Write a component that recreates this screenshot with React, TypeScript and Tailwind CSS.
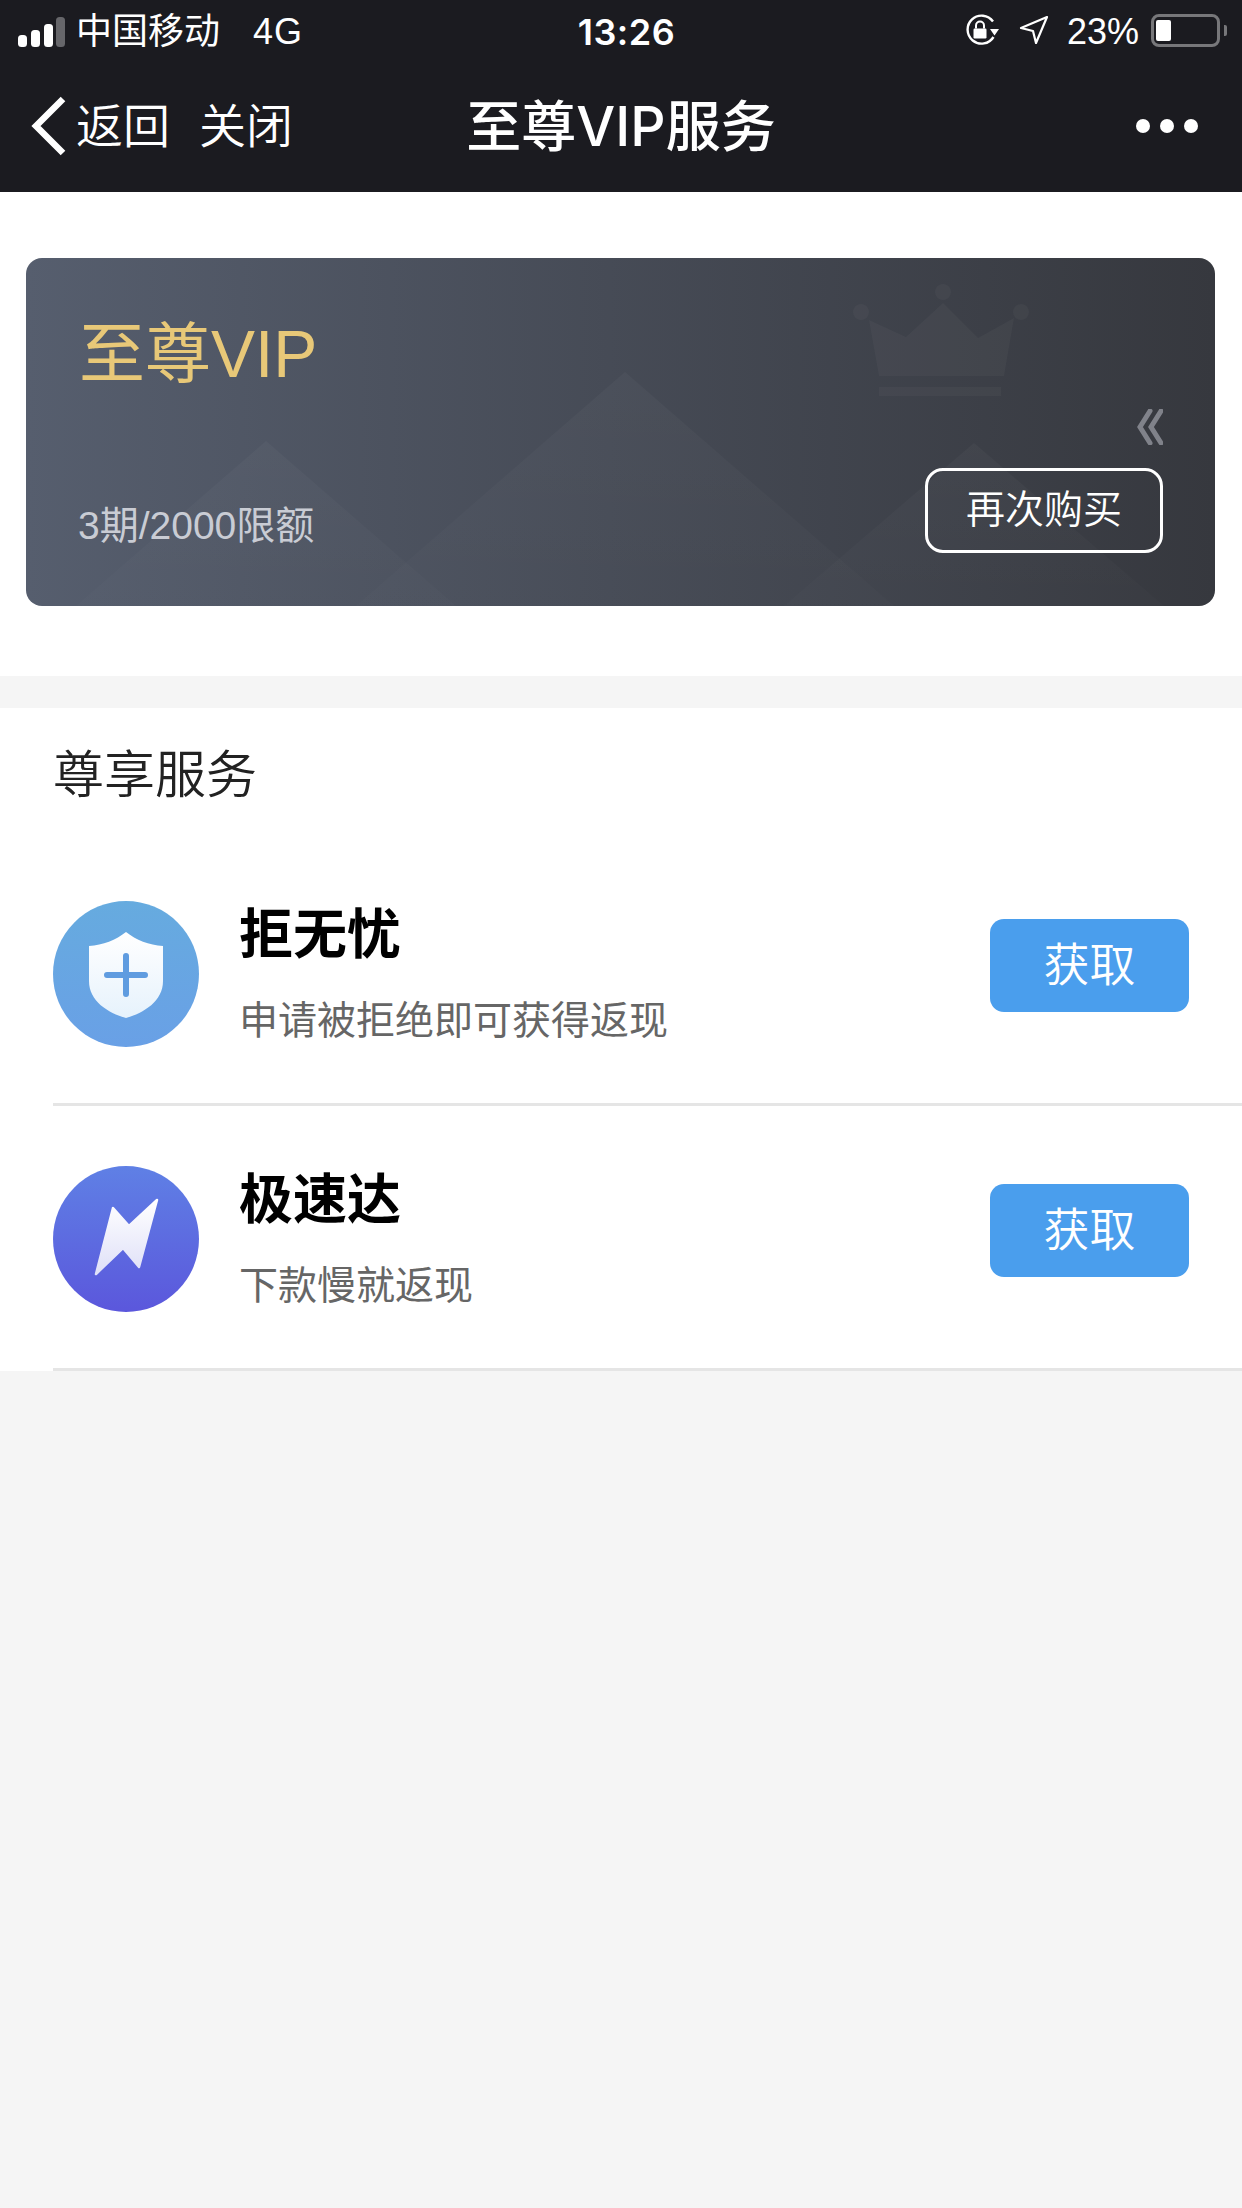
const CJK = '[font-family:"Liberation_Sans","Noto_Sans_CJK_SC",sans-serif]';
const INTER = '[font-family:Inter,"Noto_Sans_CJK_SC",sans-serif]';

const services = [
  { key: 'shield', title: '拒无忧', desc: '申请被拒绝即可获得返现' },
  { key: 'bolt', title: '极速达', desc: '下款慢就返现' },
];

function StatusBar() {
  return (
    <div className="grid h-[60px] grid-cols-[1fr_auto_1fr] items-center pl-[18px] pr-[15px] pt-[4px] text-[36px] leading-none text-white">
      <div className="flex items-center">
        <svg width="47" height="30" viewBox="0 0 47 30" className="shrink-0">
          <rect x="0" y="18" width="9" height="12" rx="3.5" fill="#fff" />
          <rect x="13" y="13" width="9" height="17" rx="3.5" fill="#fff" />
          <rect x="26" y="7" width="9" height="23" rx="3.5" fill="#fff" />
          <rect x="38" y="0" width="9" height="30" rx="3.5" fill="#66666a" />
        </svg>
        <span className="ml-[11px] w-[177px] shrink-0">中国移动</span>
        <span className="tracking-[1px]">4G</span>
      </div>
      <span className={`pl-[8px] text-center text-[36px] font-semibold tracking-[0.5px] ${INTER}`}>13:26</span>
      <div className="flex items-center justify-end">
        <svg width="36" height="33" viewBox="0 0 36 32" className="mb-[4px] shrink-0" fill="none">
          <path d="M29.5 22.5A14 14 0 1 1 29 7" stroke="#fff" strokeWidth="2.4" />
          <path d="M26 14.5h9l-4.5 6.5z" fill="#fff" />
          <rect x="9.5" y="14" width="13" height="10" rx="1.2" fill="#fff" />
          <path d="M12 14v-3a4 4 0 0 1 8 0v3" stroke="#fff" strokeWidth="2" />
        </svg>
        <svg width="30" height="30" viewBox="0 0 30 30" className="mb-[4px] ml-[19px] shrink-0" fill="none">
          <path d="M28 2 2 13l12 3 3 12z" stroke="#fff" strokeWidth="2.2" strokeLinejoin="round" />
        </svg>
        <span className="ml-[18px] w-[72px] shrink-0">23%</span>
        <div className="mb-[4px] ml-[12px] flex h-[33px] w-[69px] shrink-0 items-center rounded-[8px] border-[3px] border-[#77777a] pl-[2px]">
          <div className="h-[21px] w-[15px] rounded-[2px] bg-white" />
        </div>
        <div className="mb-[4px] ml-[4px] h-[11px] w-[3px] shrink-0 rounded-r-[2px] bg-[#77777a]" />
      </div>
    </div>
  );
}

function NavBar() {
  return (
    <div className="grid h-[132px] grid-cols-[1fr_auto_1fr] items-center text-white">
      <div className="flex items-center pl-[31px]">
        <svg width="36" height="60" viewBox="0 0 36 60" fill="none" className="shrink-0">
          <path d="M32 3 5 30l27 27" stroke="#fff" strokeWidth="6.5" />
        </svg>
        <span className="ml-[9px] text-[47px] font-[350] leading-none">返回</span>
        <span className="ml-[29px] text-[47px] font-[350] leading-none">关闭</span>
      </div>
      <div className={`text-[55px] font-medium leading-none ${INTER}`}>至尊VIP服务</div>
      <div className="flex items-center justify-end gap-[10px] pr-[44px]">
        <span className="h-[14px] w-[14px] rounded-full bg-white" />
        <span className="h-[14px] w-[14px] rounded-full bg-white" />
        <span className="h-[14px] w-[14px] rounded-full bg-white" />
      </div>
    </div>
  );
}

// background drawing of the card: overlapping mountains and a faint crown
function CardArt() {
  return (
    <svg width="1190" height="348" viewBox="25 258 1190 348" className="absolute inset-0" fill="none">
      <defs>
        <linearGradient id="mountain" x1="0" y1="0" x2="0" y2="1">
          <stop offset="0" stopColor="#fff" stopOpacity="0.03" />
          <stop offset="1" stopColor="#fff" stopOpacity="0.01" />
        </linearGradient>
      </defs>
      <path d="M265 441 455 606H75z" fill="url(#mountain)" />
      <path d="M624 372 893 606H355z" fill="url(#mountain)" />
      <path d="M973 443 1163 606H783z" fill="url(#mountain)" />
      <g fill="#fff" fillOpacity="0.03">
        <path d="M868 320 905 337 942 303 977 338 1013 318 1003 376H878z" />
        <rect x="878" y="387" width="122" height="9" />
        <circle cx="860" cy="312" r="8" />
        <circle cx="942" cy="292" r="8" />
        <circle cx="1020" cy="312" r="8" />
      </g>
    </svg>
  );
}

function VipCard() {
  return (
    <div className="relative h-[348px] overflow-hidden rounded-[16px] bg-gradient-to-r from-[#565e6e] to-[#36383e]">
      <CardArt />
      <div className="relative flex h-full justify-between pb-[53px] pl-[53px] pr-[52px] pt-[61px]">
        <div className="flex flex-col justify-between">
          <div className="text-[66px] leading-[70px] text-[#e8c878]">至尊VIP</div>
          <div className="-ml-[1px] mb-[5px] text-[39px] leading-[44px] text-[#c9ccd4]">3期/2000限额</div>
        </div>
        <div className="flex flex-col items-end justify-end">
          <svg width="26" height="36" viewBox="0 0 26 36" fill="none" className="mb-[23px]">
            <path d="M13 2 3 18l10 16M24 2 14 18l10 16" stroke="#80828a" strokeWidth="5" strokeLinecap="round" />
          </svg>
          <button className="flex h-[85px] w-[238px] items-center justify-center rounded-[18px] border-[3px] border-white text-[39px] font-[350] text-white">
            再次购买
          </button>
        </div>
      </div>
    </div>
  );
}

function ServiceIcon({ kind }: { kind: string }) {
  if (kind === 'shield') {
    return (
      <svg width="146" height="146" viewBox="0 0 146 146" className="shrink-0">
        <defs>
          <linearGradient id="shieldBg" x1="0" y1="0" x2="0" y2="1">
            <stop offset="0" stopColor="#66abdf" />
            <stop offset="1" stopColor="#69a0e6" />
          </linearGradient>
          <linearGradient id="shieldFg" x1="0" y1="0" x2="0" y2="1">
            <stop offset="0" stopColor="#ffffff" />
            <stop offset="1" stopColor="#e6f2fc" />
          </linearGradient>
        </defs>
        <circle cx="73" cy="73" r="73" fill="url(#shieldBg)" />
        <path d="M73 31C63 39 50 44 36 45V80C36 100 55 112 73 117C91 112 110 100 110 80V45C96 44 83 39 73 31Z" fill="url(#shieldFg)" />
        <path d="M54 74H92M73 55V93" stroke="#5f9ce0" strokeWidth="6" strokeLinecap="round" />
      </svg>
    );
  }
  return (
    <svg width="146" height="146" viewBox="0 0 146 146" className="shrink-0">
      <defs>
        <linearGradient id="boltBg" x1="0" y1="0" x2="0" y2="1">
          <stop offset="0" stopColor="#5f80e5" />
          <stop offset="1" stopColor="#5b57dc" />
        </linearGradient>
        <linearGradient id="boltFg" x1="0" y1="0" x2="0" y2="1">
          <stop offset="0" stopColor="#ffffff" />
          <stop offset="1" stopColor="#dfe0f8" />
        </linearGradient>
      </defs>
      <circle cx="73" cy="73" r="73" fill="url(#boltBg)" />
      <path d="M104 34 76 60 60 42 43 108 70 82 86 101Z" fill="url(#boltFg)" stroke="url(#boltFg)" strokeWidth="2.5" strokeLinejoin="round" />
    </svg>
  );
}

function ServiceRow({ item }: { item: (typeof services)[number] }) {
  return (
    <div className="ml-[53px] flex h-[265px] items-center border-b-[3px] border-[#e5e5e5] pr-[53px] pt-[3px]">
      <ServiceIcon kind={item.key} />
      <div className="ml-[40px] flex-1">
        <div className="text-[54px] font-bold leading-[60px] text-black">{item.title}</div>
        <div className="mt-[34px] text-[39px] leading-[44px] text-[#666]">{item.desc}</div>
      </div>
      <button className="mb-[16px] flex h-[93px] w-[199px] items-center justify-center rounded-[14px] bg-[#4a9eed] text-[46px] font-[350] text-white">
        获取
      </button>
    </div>
  );
}

export default function App() {
  return (
    <div className={`flex h-[2208px] w-[1242px] flex-col overflow-hidden bg-[#f5f5f5] ${CJK}`}>
      <div className="h-[192px] bg-[#1b1b20]">
        <StatusBar />
        <NavBar />
      </div>
      <div className="bg-white pb-[70px] pl-[26px] pr-[27px] pt-[66px]">
        <VipCard />
      </div>
      <div className="mt-[32px] bg-white">
        <div className="pl-[53px] pt-[38px] text-[51px] font-[350] leading-[60px] text-[#222]">尊享服务</div>
        <div className="mt-[35px]">
          {services.map((item) => (
            <ServiceRow key={item.key} item={item} />
          ))}
        </div>
      </div>
    </div>
  );
}
